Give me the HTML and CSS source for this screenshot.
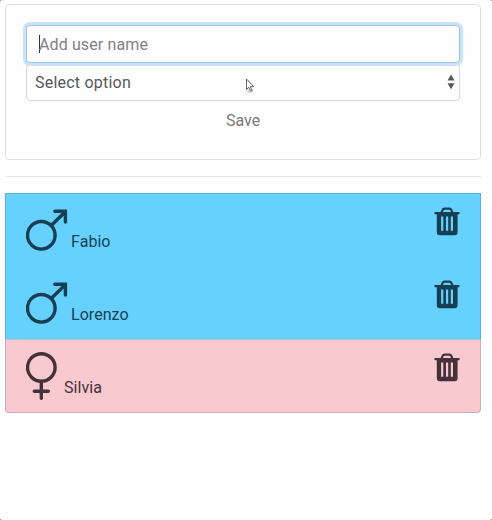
FILE: index.html
```html
<!DOCTYPE html>
<html lang="en">
<head>
<meta charset="utf-8">
<title>Users</title>
<link rel="stylesheet" href="styles.css">
</head>
<body>
<svg width="0" height="0" class="defs">
  <symbol id="male" viewBox="0 0 42 42"><g fill="none" stroke="currentColor" stroke-width="3.4"><circle cx="15.3" cy="26.3" r="13.8"/><path d="M25.500 16.300 39 3"/><path d="M28.800 2.200h10.600v10.800" stroke-linecap="round"/></g></symbol>
  <symbol id="female" viewBox="0 0 31 50"><g fill="none" stroke="currentColor" stroke-width="3.4"><circle cx="15.3" cy="15.5" r="13.8"/><path d="M15.300 29.500v16.800M8.300 39.200h14" stroke-linecap="round"/></g></symbol>
  <symbol id="trash" viewBox="0 0 26 29"><path fill="none" stroke="currentColor" stroke-width="2.2" d="M7.500 5.600 8.600 3q.5-1.300 2-1.300h4.800q1.500 0 2 1.300l1.100 2.600"/><path fill="currentColor" fill-rule="evenodd" d="M1 5h24q.6 0 .6.6v1q0 .7-.6.7h-1.400V25q0 3.300-3 3.300H5.800q-3 0-3-3.300V7.300H1q-.6 0-.6-.7v-1Q.4 5 1 5ZM7.100 9.600v14.200h2.200V9.600ZM12 9.600v14.200h2.200V9.600ZM16.800 9.600v14.200H19V9.600Z"/></symbol>
</svg>
<main>
  <form class="card">
    <div class="field field-focus"><span class="caret"></span><span class="placeholder">Add user name</span></div>
    <div class="field select"><span class="option">Select option</span>
      <svg class="arrows" width="8" height="16" viewBox="0 0 8 16"><path fill="currentColor" d="M4 .5 7.500 6.500h-7ZM.5 9.300h7L4 15.300Z"/></svg>
    </div>
    <div class="save">Save</div>
  </form>
  <hr>
  <ul class="users">
    <li class="user blue"><svg class="male"><use href="#male"/></svg><span class="name">Fabio</span><svg class="trash"><use href="#trash"/></svg></li>
    <li class="user blue"><svg class="male"><use href="#male"/></svg><span class="name">Lorenzo</span><svg class="trash"><use href="#trash"/></svg></li>
    <li class="user pink"><svg class="female"><use href="#female"/></svg><span class="name">Silvia</span><svg class="trash"><use href="#trash"/></svg></li>
  </ul>
</main>
<svg class="pointer" width="11" height="17" viewBox="0 0 11 17"><path class="pointer-shadow" d="M1 11.500h8l-2 3.500H3Z"/><path d="M1.500 1v10.500l2.300-2.300 1.700 4 1.600-.7-1.700-3.900h3.300Z" fill="#fff" stroke="#555" stroke-width=".9"/></svg>
<i class="corner tl"></i><i class="corner tr"></i><i class="corner bl"></i><i class="corner br"></i>
</body>
</html>
```
FILE: styles.css
```css
* { box-sizing: border-box; }
body {
  margin: 0;
  min-height: 520px;
  background: #fefefe;
  font: 16px/24px Roboto, "Liberation Sans", sans-serif;
  color: #55585b;
}
.defs { position: absolute; }
main { padding: 4px 11px 0 5px; }
.card {
  height: 156px;
  padding: 20px;
  border: 1px solid #dfdfdf;
  border-radius: 4px;
}
.field {
  display: flex;
  align-items: center;
  height: 38px;
  border: 1px solid #d5d6d8;
  border-radius: 4px;
  background: #fefefe;
}
.field-focus {
  position: relative;
  z-index: 1;
  padding-left: 12px;
  border-color: #98c5e8;
  box-shadow: 0 0 0 3px #c9e4fa;
}
.caret { width: 1px; height: 18px; background: #333; }
.placeholder {
  padding-top: 2px;
  margin-left: -1px;
  color: #808285;
  letter-spacing: .12px;
}
.select {
  justify-content: space-between;
  padding: 0 4px 0 8px;
}
.option { padding-top: 2px; letter-spacing: .22px; }
.save {
  height: 38px;
  line-height: 40px;
  text-align: center;
  color: #7b7b7b;
}
hr {
  margin: 16px 0;
  border: 0;
  border-top: 1px solid #e5e5e5;
}
.users {
  margin: 0;
  padding: 0;
  list-style: none;
}
.user {
  display: flex;
  align-items: flex-start;
  height: 73px;
  padding: 16px 20px 0;
  border: 1px solid #56b2d9;
  border-width: 0 1px;
}
.blue { background: #66d1ff; color: #173f52; }
.blue:first-child { border-top-width: 1px; padding-top: 15px; }
.pink {
  height: 74px;
  padding-top: 12px;
  background: #f8c9cf;
  color: #45313a;
  border: 1px solid #cfacb8;
  border-top-color: #b5bfd6;
  border-radius: 0 0 4px 4px;
}
.male { width: 42px; height: 42px; }
.female { width: 31px; height: 50px; }
.name { margin: 21px 0 0 3px; letter-spacing: .05px; }
.pink .name { margin: 24px 0 0 7px; }
.trash { width: 26px; height: 29px; margin: -2px 0 0 auto; }
.pink .trash { margin-top: 1px; }
.pointer { position: absolute; z-index: 2; left: 245px; top: 78px; }
.pointer-shadow { fill: #ddd; }
.corner { position: absolute; width: 1px; height: 1px; background: #888; }
.tl { left: 0; top: 0; }
.tr { right: 0; top: 0; background: #c77; }
.bl { left: 0; top: 519px; }
.br { right: 0; top: 519px; }
```
